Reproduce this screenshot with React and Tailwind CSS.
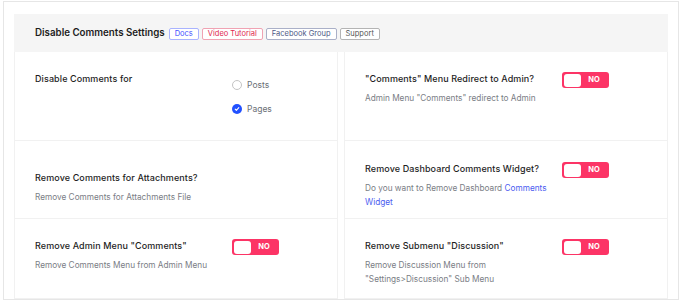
import React from 'react';

const Toggle = () => (
    <div className="flex h-[16px] w-[47px] shrink-0 items-center rounded-[3px] bg-[#fc3466] px-[2px]">
        <div className="h-[13px] w-[17px] rounded-[3px] bg-white" />
        <span className="flex-1 text-center text-[7.5px] font-bold leading-none text-white">NO</span>
    </div>
);

const Radio = ({ checked, label }) => (
    <div className="flex h-[14px] items-center gap-[5px]">
        {checked ? (
            <span className="flex h-[10px] w-[10px] items-center justify-center rounded-full bg-[#2251ff]">
                <svg width="6" height="6" viewBox="0 0 10 10" fill="none">
                    <path d="M2 5.2l2 2 4-4.4" stroke="white" strokeWidth="1.8" strokeLinecap="round" strokeLinejoin="round" />
                </svg>
            </span>
        ) : (
            <span className="h-[10px] w-[10px] rounded-full border border-[#c4c4c4] bg-white" />
        )}
        <span className="text-[8.5px] text-[#6b6f76]">{label}</span>
    </div>
);

const Setting = ({ title, children, control, className }) => (
    <div className={`flex items-start border-x border-b border-[#f1f1f1] px-[20px] ${className}`}>
        <div className="w-[185px] shrink-0">
            <div className="text-[9px] font-medium leading-[14px] tracking-[0.1px] text-[#1e1e1e]">{title}</div>
            {children && <div className="mt-[5px] text-[8.25px] leading-[14px] text-[#7a7d85]">{children}</div>}
        </div>
        {control && <div className="ml-[12px]">{control}</div>}
    </div>
);

const badges = [
    { name: 'Docs', cls: 'text-[#3f51ff] border-[#a9b3ff]' },
    { name: 'Video Tutorial', cls: 'text-[#e0284f] border-[#f0a3b3]' },
    { name: 'Facebook Group', cls: 'text-[#4e5a86] border-[#aab0c8]' },
    { name: 'Support', cls: 'text-[#555555] border-[#b4b4b4]' },
];

export default function App() {
    return (
        <div className="h-[303px] w-[680px] bg-white pl-[3px] pt-px font-['Inter',sans-serif]">
            <div className="h-[299px] w-[676px] overflow-hidden border border-[#e6e6e6] px-[10px] pt-[12px]">
                <div className="flex h-[38px] items-center gap-[3px] bg-[#f5f5f5] pl-[21px] pt-px">
                    <span className="mr-[1px] text-[9.75px] font-semibold text-[#1d1d1d]">Disable Comments Settings</span>
                    {badges.map((b) => (
                        <span key={b.name} className={`flex h-[12px] items-center rounded-[2px] border bg-white px-[5px] text-[7.5px] ${b.cls}`}>
                            {b.name}
                        </span>
                    ))}
                </div>
                <div className="grid grid-cols-2 gap-x-[6px]">
                    <div className="flex h-[89px] items-start border-x border-b border-[#f1f1f1] px-[20px] pt-[20px]">
                        <div className="w-[185px] shrink-0 text-[9px] font-medium leading-[14px] tracking-[0.1px] text-[#1e1e1e]">Disable Comments for</div>
                        <div className="ml-[12px] mt-[6px] flex flex-col gap-[10px]">
                            <Radio label="Posts" />
                            <Radio label="Pages" checked />
                        </div>
                    </div>
                    <Setting className="h-[89px] pt-[20px]" title={'"Comments" Menu Redirect to Admin?'} control={<Toggle />}>
                        Admin Menu "Comments" redirect to Admin
                    </Setting>
                    <Setting className="h-[78px] pt-[30px]" title="Remove Comments for Attachments?">
                        Remove Comments for Attachments File
                    </Setting>
                    <Setting className="h-[78px] pt-[21px]" title="Remove Dashboard Comments Widget?" control={<Toggle />}>
                        Do you want to Remove Dashboard <a className="text-[#4a5cf0]">Comments Widget</a>
                    </Setting>
                    <Setting className="h-[80px] pt-[20px]" title={'Remove Admin Menu "Comments"'} control={<Toggle />}>
                        Remove Comments Menu from Admin Menu
                    </Setting>
                    <Setting className="h-[80px] pt-[20px]" title={'Remove Submenu "Discussion"'} control={<Toggle />}>
                        Remove Discussion Menu from "Settings&gt;Discussion" Sub Menu
                    </Setting>
                </div>
            </div>
        </div>
    );
}
